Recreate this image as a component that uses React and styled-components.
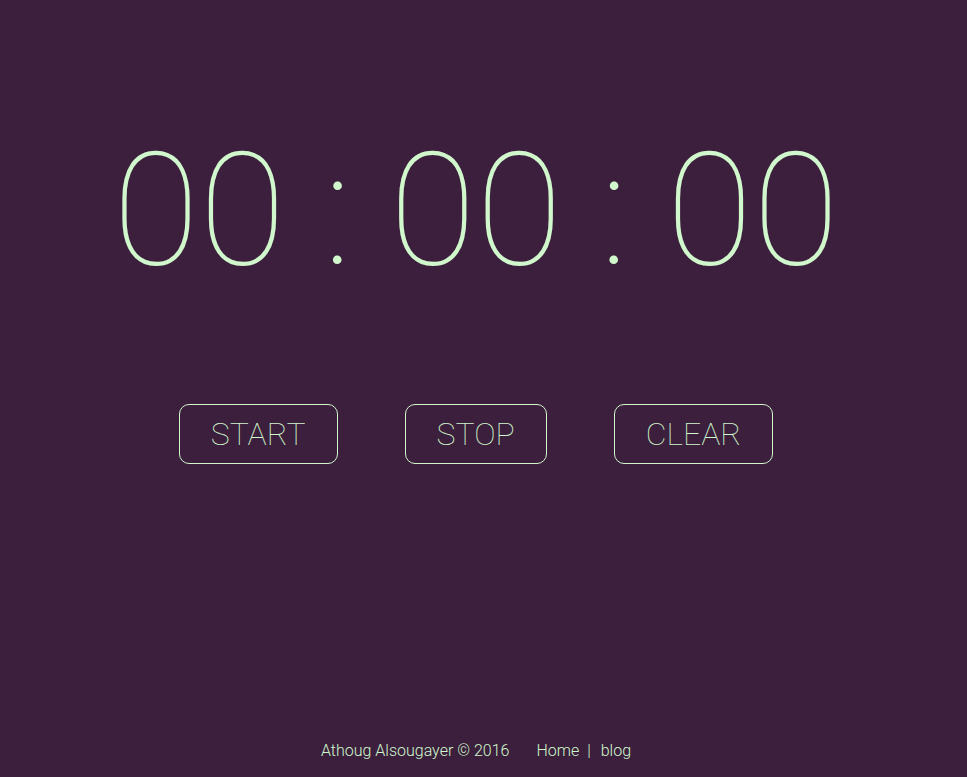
import styled, { createGlobalStyle } from 'styled-components'

const GlobalStyle = createGlobalStyle`
  html, body {
    margin: 0;
    padding: 0;
    background: #3b1f3c;
  }
  body {
    font-family: Roboto, "Liberation Sans", sans-serif;
    color: #d1f7cd;
  }
`

const Page = styled.div`
  width: 952px;
  min-height: 777px;
  display: flex;
  flex-direction: column;
  align-items: center;
`

const Timer = styled.div`
  margin-top: 118px;
  font-size: 158px;
  font-weight: 100;
  line-height: 184px;
  white-space: pre;
  text-align: center;
`

const Controls = styled.div`
  margin-top: 102px;
  display: flex;
  gap: 67px;
`

const Button = styled.button`
  height: 60px;
  padding: 0 31px;
  background: transparent;
  border: 1px solid #d1f7cd;
  border-radius: 10px;
  color: #d1f7cd;
  font-family: Roboto, "Liberation Sans", sans-serif;
  font-size: 32px;
  font-weight: 100;
  cursor: pointer;
`

const Footer = styled.footer`
  margin-top: auto;
  margin-bottom: 17px;
  font-size: 16px;
  font-weight: 300;
  display: flex;
  gap: 27px;
`

const Links = styled.span`
  display: flex;
`

const Link = styled.a`
  color: inherit;
  text-decoration: none;
`

const Divider = styled.span`
  margin: 0 10px 0 8px;
`

export default function App() {
  return (
    <Page>
      <GlobalStyle />
      <Timer>00 : 00 : 00</Timer>
      <Controls>
        <Button>START</Button>
        <Button>STOP</Button>
        <Button>CLEAR</Button>
      </Controls>
      <Footer>
        <span>Athoug Alsougayer © 2016</span>
        <Links>
          <Link href="#">Home</Link>
          <Divider>|</Divider>
          <Link href="#">blog</Link>
        </Links>
      </Footer>
    </Page>
  )
}
